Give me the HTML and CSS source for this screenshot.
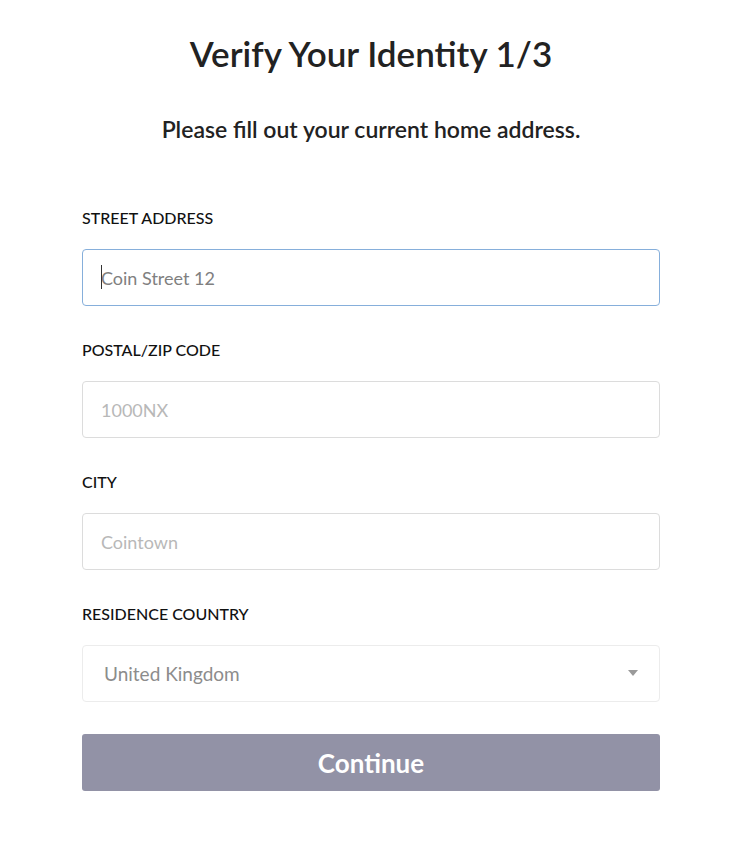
FILE: index.html
```html
<!DOCTYPE html>
<html lang="en">
<head>
    <meta charset="UTF-8">
    <meta name="viewport" content="width=device-width, initial-scale=1.0">
    <title>Verify Your Identity</title>
    <link rel="stylesheet" href="styles.css">
</head>
<body>
    <div class="wrap">
        <h1>Verify Your Identity 1/3</h1>
        <p class="intro">Please fill out your current home address.</p>

        <form class="form">
            <div class="field">
                <label for="street">STREET ADDRESS</label>
                <div class="input-box">
                    <input id="street" class="input focused" type="text" placeholder="Coin Street 12">
                    <span class="caret"></span>
                </div>
            </div>

            <div class="field">
                <label for="zip">POSTAL/ZIP CODE</label>
                <input id="zip" class="input" type="text" placeholder="1000NX">
            </div>

            <div class="field">
                <label for="city">CITY</label>
                <input id="city" class="input" type="text" placeholder="Cointown">
            </div>

            <div class="field">
                <label for="country">RESIDENCE COUNTRY</label>
                <div class="select-box">
                    <select id="country" class="select">
                        <option>United Kingdom</option>
                    </select>
                    <span class="arrow"></span>
                </div>
            </div>

            <button type="button" class="btn">Continue</button>
        </form>
    </div>
</body>
</html>
```

FILE: styles.css
```css
body {
    margin: 0;
    background: #fff;
    color: #222;
    font-family: Lato, "Noto Sans", sans-serif;
}
.wrap {
    width: 578px;
    margin: 0 84px 0 82px;
    padding-top: 30px;
}
h1 {
    margin: 0;
    text-align: center;
    font-size: 35px;
    font-weight: 600;
    line-height: 46px;
    color: #222;
}
.intro {
    margin: 39px 0 0;
    text-align: center;
    font-size: 23px;
    font-weight: 600;
    line-height: 28px;
    color: #222;
}
.form {
    margin-top: 65px;
}
.field {
    margin-bottom: 34px;
}
label {
    display: block;
    font-size: 16px;
    font-weight: 500;
    line-height: 20px;
    color: #111;
    margin-bottom: 21px;
}
.input-box, .select-box {
    position: relative;
}
.input, .select {
    display: block;
    box-sizing: border-box;
    width: 100%;
    height: 57px;
    padding: 0 18px;
    border: 1px solid #dcdcdc;
    border-radius: 4px;
    background: #fff;
    font-family: inherit;
    font-size: 18px;
    color: #333;
    outline: none;
}
.input::placeholder {
    color: #b8b8b8;
}
.input.focused {
    border-color: #86afdb;
}
.input.focused::placeholder {
    color: #808080;
}
.caret {
    position: absolute;
    left: 19px;
    top: 16px;
    width: 1px;
    height: 24px;
    background: #333;
}
.select {
    appearance: none;
    -webkit-appearance: none;
    border-color: #ececec;
    padding-left: 21px;
    color: #8c8c8c;
    font-size: 19px;
}
.arrow {
    position: absolute;
    right: 22px;
    top: 25px;
    width: 0;
    height: 0;
    border-left: 5px solid transparent;
    border-right: 5px solid transparent;
    border-top: 6px solid #9a9a9a;
}
.btn {
    display: block;
    width: 100%;
    height: 57px;
    margin-top: -2px;
    border: none;
    border-radius: 3px;
    background: #9292a6;
    color: #fff;
    font-family: inherit;
    font-size: 26px;
    font-weight: 700;
    cursor: pointer;
}
```
